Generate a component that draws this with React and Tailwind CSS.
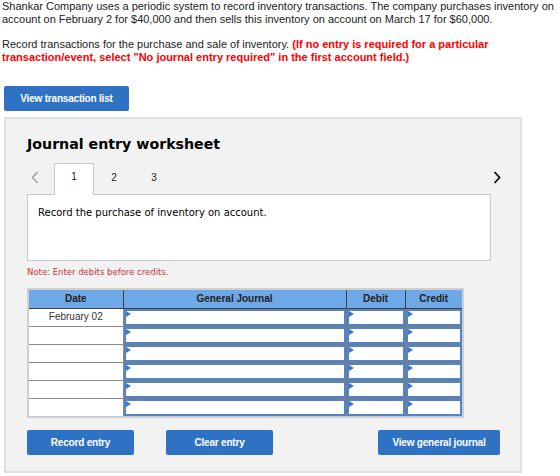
import React from 'react';

const rows = ['February 02', '', '', '', '', ''];

// blue-bordered entry cell with the little dropdown marker in its corner
const EntryCell = () => (
  <td className="p-0 border border-[#7a7a7a] h-[18px]">
    <div className="relative h-[17px] border-2 border-[#5584c4] bg-white">
      <span className="absolute left-0 top-0 w-0 h-0 border-y-[3px] border-y-transparent border-l-[5px] border-l-[#3b78c8]" />
    </div>
  </td>
);

const BlueButton = ({ children, className = '' }) => (
  <button
    className={`h-[25px] rounded-[2px] bg-[#2f72c4] text-white text-[10px] font-bold tracking-[-0.2px] ${className}`}
    style={{ fontFamily: 'Arial, "Liberation Sans", sans-serif' }}
  >
    {children}
  </button>
);

const Chevron = ({ dir, className }) => (
  <svg width="8" height="13" viewBox="0 0 8 13" className={className}>
    <path
      d={dir === 'left' ? 'M6.5 1 L1.5 6.5 L6.5 12' : 'M1.5 1 L6.5 6.5 L1.5 12'}
      fill="none"
      stroke="currentColor"
      strokeWidth={dir === 'left' ? 1.3 : 1.8}
    />
  </svg>
);

export default function App() {
  return (
    <div
      className="w-[560px] h-[476px] bg-white overflow-hidden text-[#222]"
      style={{ fontFamily: '"Liberation Sans", Arial, sans-serif' }}
    >
      <p className="pl-[2px] text-[11px] leading-[13px]">
        Shankar Company uses a periodic system to record inventory transactions. The company purchases inventory on
        account on February 2 for $40,000 and then sells this inventory on account on March 17 for $60,000.
      </p>
      <p className="pl-[2px] mt-[12px] text-[11px] leading-[13px]">
        Record transactions for the purchase and sale of inventory.{' '}
        <span className="font-bold text-[#f00]">(If no entry is required for a particular</span>
        <br />
        <span className="font-bold text-[#f00]">
          transaction/event, select "No journal entry required" in the first account field.)
        </span>
      </p>

      <div className="pl-[4px] mt-[21px]">
        <BlueButton className="w-[125px]">View transaction list</BlueButton>
      </div>

      <div className="ml-[4px] mt-[6px] w-[518px] h-[356px] border-2 border-[#e0e0e0] bg-[#f2f2f2]">
        <h2
          className="pl-[21px] pt-[16px] text-[14.2px] leading-[18px] font-bold text-black"
          style={{ fontFamily: 'Verdana, "DejaVu Sans", sans-serif' }}
        >
          Journal entry worksheet
        </h2>

        <div className="flex items-end h-[27px] mt-[14px] pl-[25px] w-[494px] relative">
          <Chevron dir="left" className="text-[#999] mb-[10px]" />
          <div className="w-[40px] h-[32px] border border-b-0 border-[#c8c8c8] bg-white flex items-center justify-center pb-[6px] text-[10px] -mb-[1px] ml-[15px] relative z-10">
            1
          </div>
          <span className="w-[40px] text-center text-[10px] mb-[9px]">2</span>
          <span className="w-[40px] text-center text-[10px] mb-[9px]">3</span>
          <Chevron dir="right" className="ml-auto text-[#111] mb-[10px] -mr-[1px]" />
        </div>

        <div
          className="ml-[21px] w-[464px] h-[67px] border border-[#c8c8c8] bg-white pl-[10px] pt-[11px] text-[10px] leading-[14px] text-black"
          style={{ fontFamily: 'Verdana, "DejaVu Sans", sans-serif' }}
        >
          Record the purchase of inventory on account.
        </div>

        <p
          className="ml-[21px] mt-[6px] text-[8.5px] leading-[10px] text-[#c8343c]"
          style={{ fontFamily: 'Verdana, "DejaVu Sans", sans-serif' }}
        >
          Note: Enter debits before credits.
        </p>

        <table className="ml-[21px] mt-[11px] w-[437px] border-collapse border-2 border-[#cfcfcf] table-fixed">
          <thead>
            <tr className="h-[19px] bg-[#6fa8e6] text-[10px] font-bold text-[#222]">
              <th className="w-[95px] border border-[#3f3f3f] border-t-0 border-l-0">Date</th>
              <th className="w-[223px] border border-[#3f3f3f] border-t-0">General Journal</th>
              <th className="w-[59px] border border-[#3f3f3f] border-t-0">Debit</th>
              <th className="border border-[#3f3f3f] border-t-0 border-r-0">Credit</th>
            </tr>
          </thead>
          <tbody>
            {rows.map((date, i) => (
              <tr key={i} className="bg-white">
                <td className="h-[18px] p-0 border border-[#8a8a8a] border-l-0 text-center text-[10px] leading-[16px] text-[#333]">
                  {date}
                </td>
                <EntryCell />
                <EntryCell />
                <EntryCell />
              </tr>
            ))}
          </tbody>
        </table>

        <div className="flex items-center mt-[12px] pl-[21px]">
          <BlueButton className="w-[107px]">Record entry</BlueButton>
          <BlueButton className="w-[107px] ml-[32px]">Clear entry</BlueButton>
          <BlueButton className="w-[122px] ml-[105px]">View general journal</BlueButton>
        </div>
      </div>
    </div>
  );
}
